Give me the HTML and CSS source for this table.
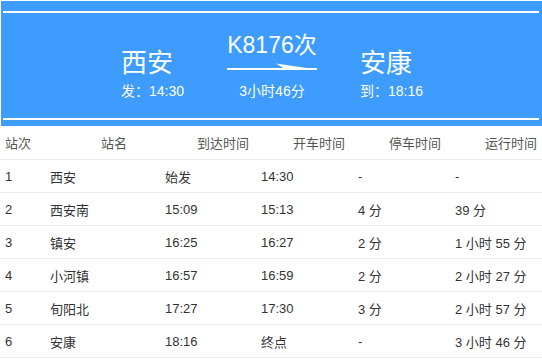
FILE: index.html
```
<!DOCTYPE html>
<html lang="zh-CN">
<head>
<meta charset="utf-8">
<title>K8176次</title>
<link rel="stylesheet" href="styles.css">
</head>
<body>
<div class="banner">
  <div class="route">
    <div class="station">
      <div class="station-name">西安</div>
      <div class="station-time">发：14:30</div>
    </div>
    <div class="train">
      <div class="train-no">K8176次</div>
      <svg class="arrow" width="90" height="9" viewBox="0 0 90 9">
        <rect x="0" y="6" width="90" height="2" fill="#fff"/>
        <polygon points="49,1.5 90,7.6 57,6.5" fill="#fff"/>
      </svg>
      <div class="train-dur">3小时46分</div>
    </div>
    <div class="station">
      <div class="station-name">安康</div>
      <div class="station-time">到：18:16</div>
    </div>
  </div>
</div>
<div class="table">
  <div class="thead">
    <div>站次</div><div>站名</div><div>到达时间</div><div>开车时间</div><div>停车时间</div><div>运行时间</div>
  </div>
  <div class="row"><div>1</div><div>西安</div><div>始发</div><div>14:30</div><div>-</div><div>-</div></div>
  <div class="row"><div>2</div><div>西安南</div><div>15:09</div><div>15:13</div><div>4 分</div><div>39 分</div></div>
  <div class="row"><div>3</div><div>镇安</div><div>16:25</div><div>16:27</div><div>2 分</div><div>1 小时 55 分</div></div>
  <div class="row"><div>4</div><div>小河镇</div><div>16:57</div><div>16:59</div><div>2 分</div><div>2 小时 27 分</div></div>
  <div class="row"><div>5</div><div>旬阳北</div><div>17:27</div><div>17:30</div><div>3 分</div><div>2 小时 57 分</div></div>
  <div class="row"><div>6</div><div>安康</div><div>18:16</div><div>终点</div><div>-</div><div>3 小时 46 分</div></div>
</div>
</body>
</html>
```
FILE: styles.css
```
html, body {
  margin: 0;
  padding: 0;
  background: #fff;
}
body {
  font-family: "Liberation Sans", "Noto Sans CJK SC", sans-serif;
  width: 542px;
  overflow: hidden;
}
.banner {
  background: #3d9cfd;
  margin: 1px 0 0 1px;
  padding: 10px 3px 6px 2px;
  color: #fff;
}
.route {
  border-top: 2px solid #fff;
  border-bottom: 2px solid #fff;
  display: flex;
  justify-content: center;
  align-items: flex-end;
  gap: 43px;
  padding: 19px 0 19px 2px;
}
.station-name {
  font-size: 26px;
  line-height: 30px;
  margin-bottom: 5px;
}
.station-time, .train-dur {
  font-size: 14px;
  line-height: 16px;
}
.train {
  display: flex;
  flex-direction: column;
  align-items: center;
  width: 90px;
}
.train-no {
  font-size: 23px;
  line-height: 26px;
  white-space: nowrap;
}
.arrow {
  display: block;
  margin-top: 4px;
}
.train-dur {
  margin-top: 12px;
  white-space: nowrap;
}
.table {
  font-size: 13px;
  color: #333;
}
.thead {
  display: grid;
  grid-template-columns: 96px 96px 96px 96px 96px 1fr;
  padding-left: 5px;
  height: 33px;
  align-items: center;
  color: #555;
  border-bottom: 1px solid #eee;
}
.row {
  display: grid;
  grid-template-columns: 45px 115px 96px 97px 97px 1fr;
  padding-left: 5px;
  height: 32px;
  align-items: center;
  border-bottom: 1px solid #eee;
}
```
